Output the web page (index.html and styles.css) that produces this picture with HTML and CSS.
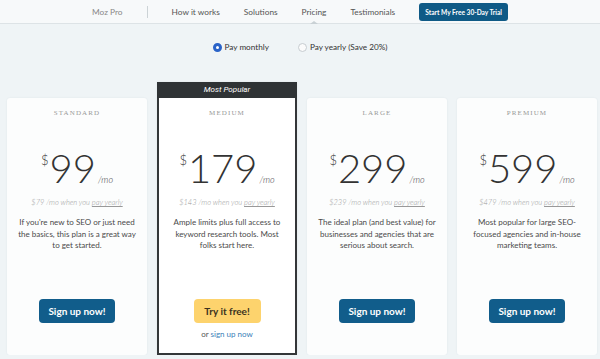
FILE: index.html
```html
<!DOCTYPE html>
<html lang="en">
<head>
  <meta charset="UTF-8" />
  <meta name="viewport" content="width=device-width, initial-scale=1.0" />
  <title>Moz Pro - Pricing</title>
  <link rel="stylesheet" href="styles.css">
</head>
<body>
  <nav class="topnav">
    <span class="brand">Moz Pro</span>
    <span class="divider"></span>
    <a href="#">How it works</a>
    <a href="#">Solutions</a>
    <a href="#" class="active">Pricing</a>
    <a href="#">Testimonials</a>
    <a href="#" class="trial-btn">Start My Free 30-Day Trial</a>
  </nav>

  <div class="billing">
    <label class="opt"><span class="radio checked"></span>Pay monthly</label>
    <label class="opt"><span class="radio"></span>Pay yearly (Save 20%)</label>
  </div>

  <div class="plans">
    <div class="plan">
      <div class="plan-body">
        <div class="plan-name">STANDARD</div>
        <div class="price"><span class="cur">$</span>99<span class="per">/mo</span></div>
        <div class="yearly">$79 /mo when you <u>pay yearly</u></div>
        <p class="desc">If you're new to SEO or just need<br>the basics, this plan is a great way<br>to get started.</p>
        <a href="#" class="btn">Sign up now!</a>
      </div>
    </div>

    <div class="plan popular">
      <div class="badge">Most Popular</div>
      <div class="plan-body">
        <div class="plan-name">MEDIUM</div>
        <div class="price"><span class="cur">$</span>179<span class="per">/mo</span></div>
        <div class="yearly">$143 /mo when you <u>pay yearly</u></div>
        <p class="desc">Ample limits plus full access to<br>keyword research tools. Most<br>folks start here.</p>
        <a href="#" class="btn btn-free">Try it free!</a>
        <div class="alt">or <a href="#">sign up now</a></div>
      </div>
    </div>

    <div class="plan">
      <div class="plan-body">
        <div class="plan-name">LARGE</div>
        <div class="price"><span class="cur">$</span>299<span class="per">/mo</span></div>
        <div class="yearly">$239 /mo when you <u>pay yearly</u></div>
        <p class="desc">The ideal plan (and best value) for<br>businesses and agencies that are<br>serious about search.</p>
        <a href="#" class="btn">Sign up now!</a>
      </div>
    </div>

    <div class="plan">
      <div class="plan-body">
        <div class="plan-name">PREMIUM</div>
        <div class="price"><span class="cur">$</span>599<span class="per">/mo</span></div>
        <div class="yearly">$479 /mo when you <u>pay yearly</u></div>
        <p class="desc">Most popular for large SEO-<br>focused agencies and in-house<br>marketing teams.</p>
        <a href="#" class="btn">Sign up now!</a>
      </div>
    </div>
  </div>
</body>
</html>
```

FILE: styles.css
```css
body {
  margin: 0;
  font-family: Lato, 'Open Sans', sans-serif;
  background: #eff4f6;
  color: #444;
}

a {
  color: inherit;
  text-decoration: none;
}

.topnav {
  height: 23px;
  background: #f7f9fa;
  border-bottom: 1px solid #dde3e6;
  display: flex;
  align-items: center;
  justify-content: center;
  gap: 24px;
  font-size: 8.3px;
  color: #555;
}

.brand {
  color: #888;
}

.divider {
  width: 1px;
  height: 12px;
  background: #ccd3d6;
}

.topnav .active {
  position: relative;
}

.topnav .active::after {
  content: "";
  position: absolute;
  left: 50%;
  bottom: -7px;
  margin-left: -4px;
  border: 4px solid transparent;
  border-bottom: 3px solid #c9d1d5;
  border-top: 0;
}

.trial-btn {
  background: #0f5a86;
  color: white;
  font-size: 6.6px;
  font-weight: bold;
  padding: 0 6px;
  height: 18px;
  line-height: 18px;
  border-radius: 3px;
}

.billing {
  display: flex;
  justify-content: center;
  gap: 29px;
  margin-top: 16px;
  font-size: 8.2px;
  color: #333;
}

.opt {
  display: flex;
  align-items: center;
  gap: 3px;
  height: 14px;
}

.radio {
  width: 9px;
  height: 9px;
  border-radius: 50%;
  border: 1px solid #c6ccd0;
  background: #fbfbfb;
  box-sizing: border-box;
}

.radio.checked {
  border: 3px solid #2a63c8;
  background: #fff;
}

.plans {
  display: flex;
  align-items: flex-end;
  gap: 10px;
  padding-left: 7px;
  margin-top: 28px;
}

.plan {
  width: 140px;
  background: #fcfdfd;
  border-radius: 3px;
  box-shadow: 0 0 2px rgba(0, 60, 80, 0.08);
  text-align: center;
}

.plan-body {
  height: 257px;
}

.popular {
  background: #fff;
  border: 2px solid #333638;
  border-top: 0;
  border-radius: 0;
  width: 136px;
}

.popular .plan-body {
  height: 255px;
}

.badge {
  background: #2f3335;
  color: white;
  font-family: Roboto, sans-serif;
  font-style: italic;
  font-size: 8px;
  height: 16px;
  line-height: 16px;
  margin: 0 -2px;
}

.plan-name {
  padding-top: 10px;
  font-family: 'Liberation Serif', serif;
  font-size: 7px;
  line-height: 10px;
  letter-spacing: 1.1px;
  color: #999;
}

.price {
  margin-top: 30px;
  font-size: 40px;
  line-height: 40px;
  height: 40px;
  font-weight: 300;
  color: #333;
}

.cur {
  display: inline-block;
  vertical-align: top;
  font-size: 13px;
  line-height: 13px;
  margin-top: 6px;
  margin-right: 1px;
}

.per {
  font-size: 9px;
  line-height: 1;
  font-style: italic;
  margin-left: 2px;
}

.yearly {
  margin-top: 10px;
  font-size: 7.5px;
  line-height: 10px;
  font-style: italic;
  font-weight: 300;
  color: #999;
}

.desc {
  margin: 9px 0 0;
  font-size: 8px;
  line-height: 11.7px;
  color: #4a4a4a;
  height: 82px;
}

.btn {
  display: inline-block;
  width: 76px;
  height: 24px;
  line-height: 24px;
  background: #115d8b;
  color: white;
  font-size: 10px;
  font-weight: bold;
  border-radius: 4px;
  vertical-align: top;
}

.btn-free {
  width: 67px;
  background: #fdd36d;
  color: #3b3220;
}

.alt {
  margin-top: 6px;
  font-size: 8px;
  line-height: 10px;
  color: #555;
}

.alt a {
  color: #3a7fb8;
}
```
